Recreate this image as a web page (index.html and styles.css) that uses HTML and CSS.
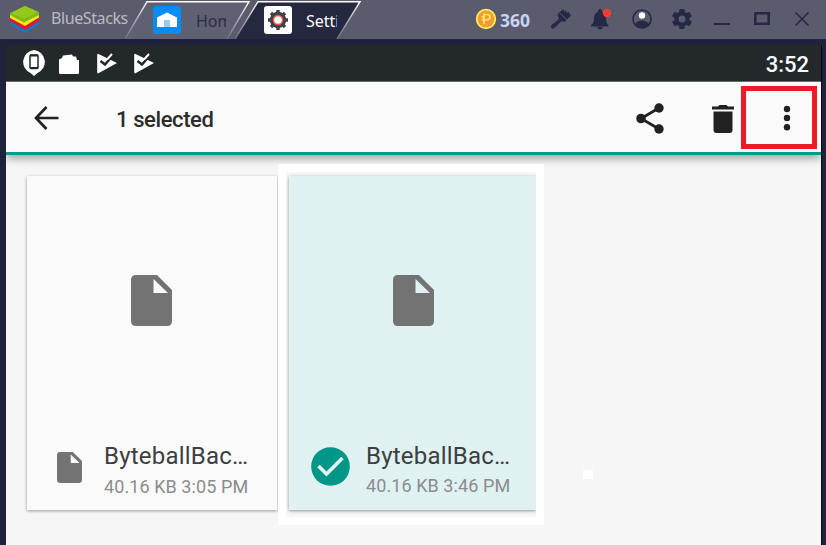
FILE: index.html
```html
<!DOCTYPE html>
<html lang="en">
<head>
<meta charset="utf-8">
<title>BlueStacks</title>
<link rel="stylesheet" href="styles.css">
</head>
<body>
<svg width="0" height="0" class="defs" aria-hidden="true">
  <symbol id="file" viewBox="0 0 41 51"><path fill-rule="evenodd" d="M5 0H26L41 15V46Q41 51 36 51H5Q0 51 0 46V5Q0 0 5 0ZM22.5 4V18H37Z"/></symbol>
  <symbol id="play-check" viewBox="0 0 20 21"><path fill="#fff" d="M1 .8L20 10 1 20.5Q.2 20 .2 19V2Q.2 1 1 .8Z"/><path fill="none" stroke="#23282b" stroke-width="2.4" d="M3.5 8L8 11.5 17 1"/><path fill="none" stroke="#fff" stroke-width="2" d="M10 6.5L15 1"/></symbol>
</svg>
<div class="window">
  <header class="titlebar">
    <div class="brand">
      <svg width="30" height="28" viewBox="0 0 30 28"><path fill="#1478c8" d="M0 17L15 10 29 17V19L15 28 1 20Z"/><path fill="#e5142c" d="M0 13L15 6 29 13V16L15 25 0 16Z"/><path fill="#ffe51b" d="M0 10L29 10V12.5L15 21 0 13Z"/><path fill="#7db817" d="M0 8L15 1 29 7V10L14 17.5 0 10Z"/><path fill="#93c91a" d="M1 8L15 1 28 7 14 14Z"/></svg>
      <span>BlueStacks</span>
    </div>
    <div class="tab">
      <svg class="shape" width="126" height="39" viewBox="0 0 126 39"><path fill="#5f6072" d="M0 39L22 1H124L102 39Z"/><path fill="none" stroke="url(#edge)" stroke-width="1.4" d="M0 39L22 1.7H124L102 39"/><defs><linearGradient id="edge" x1="0" y1="0" x2="0" y2="1"><stop offset="0" stop-color="#fff"/><stop offset=".5" stop-color="#a9abba"/><stop offset="1" stop-color="#6d6e80"/></linearGradient></defs></svg>
      <svg class="tab-icon" width="28" height="28" viewBox="0 0 28 28"><rect width="28" height="28" rx="3" fill="#058cf5"/><path fill="#fff" d="M4 11.5L14 6.5 24 11.5V21H4Z"/><path fill="#93cdfa" d="M11 14H17V21H11Z"/></svg>
      <span class="tab-label home">Home</span>
    </div>
    <div class="tab active">
      <svg class="shape" width="126" height="39" viewBox="0 0 126 39"><path fill="#262840" d="M0 39L23 1H125L102 39Z"/><path fill="none" stroke="url(#edge)" stroke-width="1.4" d="M0 39L23 1.7H125L102 39"/></svg>
      <svg class="tab-icon" width="28" height="28" viewBox="0 0 28 28"><rect width="28" height="28" rx="3" fill="#fff"/><g transform="translate(14 14)"><circle r="6.2" fill="none" stroke="#414044" stroke-width="4"/><path stroke="#414044" stroke-width="3.4" d="M0-10V-6M0 10V6M-10 0H-6M10 0H6M-7-7L-5-5M7 7L5 5M-7 7L-5 5M7-7L5-5"/><circle r="4.6" fill="#fff" stroke="#f05545" stroke-width="1.5"/></g></svg>
      <span class="tab-label settings">Settings</span>
    </div>
    <div class="tools">
      <svg width="22" height="22" viewBox="0 0 22 22"><circle cx="11" cy="11" r="9.3" fill="#f29b38" stroke="#fff05a" stroke-width="1.7"/><path fill="none" stroke="#ffef62" stroke-width="1.6" d="M9 16V6.5H12Q15 6.5 15 9T12 11.8H7M6.5 9H10"/></svg>
      <span class="points">360</span>
      <svg class="brush" width="22" height="22" viewBox="0 0 22 22" fill="#262946"><path d="M8.500 5L13.500 1 14 4 16 2 16.500 5 18.500 4 21 7.500 14.500 14Q12 12.500 10.500 14L5 19.500Q3 21.500 1.500 20T2 16.500L8 12Q9.500 10 7.500 7.500Z"/><path stroke="#5a5b6d" d="M9.500 5L17 12"/></svg>
      <svg class="bell" width="22" height="22" viewBox="0 0 22 22" fill="#262946"><path d="M8 4Q8 1 10 1T12 4Q16 5 16 11Q16 15 18.5 17V18.5H1V17Q4 15 4 11Q4 5 8 4ZM7 19H13Q12 21.5 10 21.5T7 19Z"/><circle cx="17" cy="5" r="4.2" fill="#ff3b2f"/></svg>
      <svg class="user" width="22" height="22" viewBox="0 0 22 22"><circle cx="11" cy="11" r="9" fill="none" stroke="#262946" stroke-width="1.6"/><path fill="#262946" d="M4 16.5Q6 12.5 11 12.5T18 16.5Q15 19.5 11 19.5T4 16.5Z"/><circle cx="11" cy="7.5" r="3.2" fill="#fff"/></svg>
      <svg class="gear" width="20" height="20" viewBox="2 2 20 20" fill="#262946"><path d="M19.4 13c0-.3.1-.6.1-1s0-.7-.1-1l2.1-1.6a.5.5 0 0 0 .1-.7l-2-3.4a.5.5 0 0 0-.6-.2l-2.5 1a7 7 0 0 0-1.7-1L14.4 2.400a.5.5 0 0 0-.5-.4h-4a.5.500 0 0 0-.5.4L9 5.100a7 7 0 0 0-1.700 1L4.800 5.100a.5.5 0 0 0-.6.2l-2 3.400a.5.5 0 0 0 .1.700L4.500 11a8 8 0 0 0 0 2l-2.200 1.600a.5.5 0 0 0-.1.700l2 3.400c.1.200.4.300.6.200l2.500-1a7 7 0 0 0 1.700 1l.4 2.700c0 .2.200.4.500.4h4c.2 0 .4-.2.5-.4l.4-2.700a7 7 0 0 0 1.700-1l2.500 1c.2.100.5 0 .6-.2l2-3.400a.5.5 0 0 0-.1-.7ZM12 15.500a3.500 3.500 0 1 1 0-7 3.500 3.500 0 0 1 0 7Z"/></svg>
      <svg class="controls" width="96" height="16" viewBox="0 0 96 16" fill="none" stroke="#262946" stroke-width="2"><path d="M0 13H16"/><path stroke-width="2.6" d="M41.300 2.300H54.700V12.700H41.300Z"/><path stroke-width="1.6" d="M81.500 1.500L94.500 14.500M94.500 1.500L81.500 14.500"/></svg>
    </div>
  </header>
  <div class="device">
    <div class="status">
      <svg width="24" height="26" viewBox="0 0 24 26"><path fill="#fff" d="M12 0A12 12 0 0 1 15.500 23L12 26 8.500 23A12 12 0 0 1 12 0Z"/><rect x="8" y="5" width="8" height="13.500" rx="1" fill="none" stroke="#23282b" stroke-width="1.500"/><path stroke="#23282b" stroke-width="2" d="M8 5.500H16M8 18H16"/></svg>
      <svg class="folder" width="21" height="20" viewBox="0 0 21 20"><path fill="#fff" d="M0 5.500L3 4 4 1.500 13 .5 14 2.500H17L18 6H20V18.500L19.500 20H.5L0 18.500Z"/></svg>
      <svg class="play" width="20" height="21"><use href="#play-check"/></svg>
      <svg class="play second" width="20" height="21"><use href="#play-check"/></svg>
      <span class="clock">3:52</span>
    </div>
    <div class="appbar">
      <svg class="back" width="25" height="24" viewBox="0 0 25 24" fill="none" stroke="#212121" stroke-width="2.700"><path d="M12.500 1L2 12 12.500 23M2 12H24.500"/></svg>
      <span class="title">1 selected</span>
      <svg class="share" width="28" height="31" viewBox="0 0 28 31" fill="#212121"><path fill="none" stroke="#212121" stroke-width="2.700" d="M23 5L5 15.500 23 26"/><circle cx="23" cy="5" r="4.700"/><circle cx="5" cy="15.500" r="4.800"/><circle cx="23" cy="26" r="4.700"/></svg>
      <svg class="trash" width="22" height="28" viewBox="0 0 22 28" fill="#212121"><path d="M0 1.500H6L7.500 0H14.500L16 1.500H22V4.500H0ZM1.500 6.500H20.500V25Q20.500 28 17.500 28H4.500Q1.500 28 1.500 25Z"/></svg>
      <div class="overflow"><svg width="8" height="26" viewBox="0 0 8 26" fill="#212121"><circle cx="4" cy="4" r="3.200"/><circle cx="4" cy="13" r="3.200"/><circle cx="4" cy="22.300" r="3.200"/></svg></div>
    </div>
    <main class="content">
      <article class="card">
        <div class="preview"><svg width="41" height="51"><use href="#file"/></svg></div>
        <div class="info">
          <svg class="mini" width="25" height="31"><use href="#file"/></svg>
          <div><div class="name">ByteballBac…</div><div class="meta">40.16 KB 3:05 PM</div></div>
        </div>
      </article>
      <div class="highlight">
        <article class="card selected">
          <div class="preview"><svg width="41" height="51"><use href="#file"/></svg></div>
          <div class="info">
            <svg class="check" width="39" height="39" viewBox="0 0 39 39"><circle cx="19.500" cy="19.500" r="19.300" fill="#009688"/><path fill="none" stroke="#e0f2f1" stroke-width="3.700" d="M7.500 19L15.500 27 31.500 11"/></svg>
            <div><div class="name">ByteballBac…</div><div class="meta">40.16 KB 3:46 PM</div></div>
          </div>
        </article>
      </div>
      <div class="mark"></div>
    </main>
  </div>
</div>
</body>
</html>
```
FILE: styles.css
```css
* { box-sizing: border-box; }
body { margin: 0; overflow: hidden; font-family: Roboto, "Liberation Sans", sans-serif; }
svg { display: block; flex: none; }
.defs { position: absolute; }
.window { width: 826px; height: 545px; background: #20223b; display: flex; flex-direction: column; }
.titlebar { height: 39px; flex: none; background: #5a5b6c; display: flex; }
.brand { width: 125px; flex: none; display: flex; padding: 5px 0 0 10px; font: 16px/26px "Noto Sans", sans-serif; color: #b9bbc3; white-space: nowrap; }
.brand span { margin-left: 11px; letter-spacing: -0.4px; }
.tab { position: relative; width: 126px; flex: none; display: flex; padding: 6px 0 0 28px; }
.tab.active { margin-left: -16px; padding-left: 29px; }
.shape { position: absolute; left: 0; top: 0; }
.tab-icon { position: relative; }
.tab-label { position: relative; overflow: hidden; white-space: nowrap; font: 16px/30px "Noto Sans", sans-serif; height: 30px; }
.home { width: 30px; margin-left: 15px; color: #2b2d48; }
.settings { width: 31px; margin-left: 14px; color: #fff; }
.tools { display: flex; align-items: flex-start; padding: 8px 0 0 114px; }
.points { width: 34px; margin: 0 16px 0 3px; font: bold 17.5px/25px "Noto Sans", sans-serif; color: #c5d3f5; }
.bell { margin-left: 18px; }
.user { margin-left: 19px; }
.gear { margin: 1px 0 0 19px; }
.controls { margin: 3px 0 0 22px; }
.device { width: 816px; height: 500px; margin: 6px 0 0 6px; border-right: 1px solid #05060c; background: #f6f6f6; display: flex; flex-direction: column; }
.status { height: 37px; flex: none; background: #23282b; border-bottom: 1px solid #666b6d; display: flex; align-items: flex-start; padding: 5px 12px 0 16px; }
.folder { margin: 4px 0 0 13px; }
.play { margin: 3px 0 0 17px; }
.play.second { margin-left: 17px; }
.clock { margin-left: auto; font-size: 22px; font-weight: 500; line-height: 29px; color: #fff; }
.appbar { position: relative; z-index: 1; height: 73px; flex: none; background: #fafafa; border-bottom: 3px solid #07998b; box-shadow: 0 3px 9px rgba(0, 0, 0, .38); clip-path: inset(0 0 -20px 0); display: flex; align-items: flex-start; padding: 4px 4px 0 28px; }
.back { margin-top: 20px; }
.title { width: 110px; margin-left: 57px; font-size: 22px; letter-spacing: -0.4px; font-weight: 500; line-height: 67px; color: #2c2c2c; white-space: nowrap; }
.share { margin: 17px 0 0 auto; }
.trash { margin: 19px 0 0 48px; }
.overflow { width: 76px; height: 63px; margin-left: 7px; border: 5px solid #ed1c24; display: flex; padding: 14px 0 0 37px; }
.content { flex: 1; display: flex; align-items: flex-start; padding: 9px 0 0 21px; }
.card { width: 250px; height: 334px; margin-top: 12px; background: #fafafa; box-shadow: 0 1px 3px rgba(0, 0, 0, .4); display: flex; flex-direction: column; }
.preview { height: 258px; padding: 99px 0 0 104px; fill: #737373; }
.info { display: flex; align-items: flex-start; padding-left: 30px; }
.mini { margin: 18px 22px 0 0; fill: #737373; }
.name { font-size: 24px; letter-spacing: 0.22px; line-height: 30px; margin-top: 7px; color: #3c3f3f; white-space: nowrap; }
.meta { font-size: 18px; letter-spacing: 0.08px; line-height: 24px; margin-top: 4px; color: #8a8d8d; white-space: nowrap; }
.highlight { position: relative; z-index: 2; width: 266px; height: 361px; margin-left: 1px; border: 8px solid #fff; background: #f6f6f6; overflow: hidden; padding-left: 3px; }
.selected { width: 247px; margin-top: 4px; background: #e0f1f1; }
.selected .info { padding-left: 22px; }
.selected .meta { margin-top: 3px; }
.check { margin: 13px 16px 0 0; }
.mark { width: 10px; height: 9px; margin: 306px 0 0 39px; background: #fff; }
```
